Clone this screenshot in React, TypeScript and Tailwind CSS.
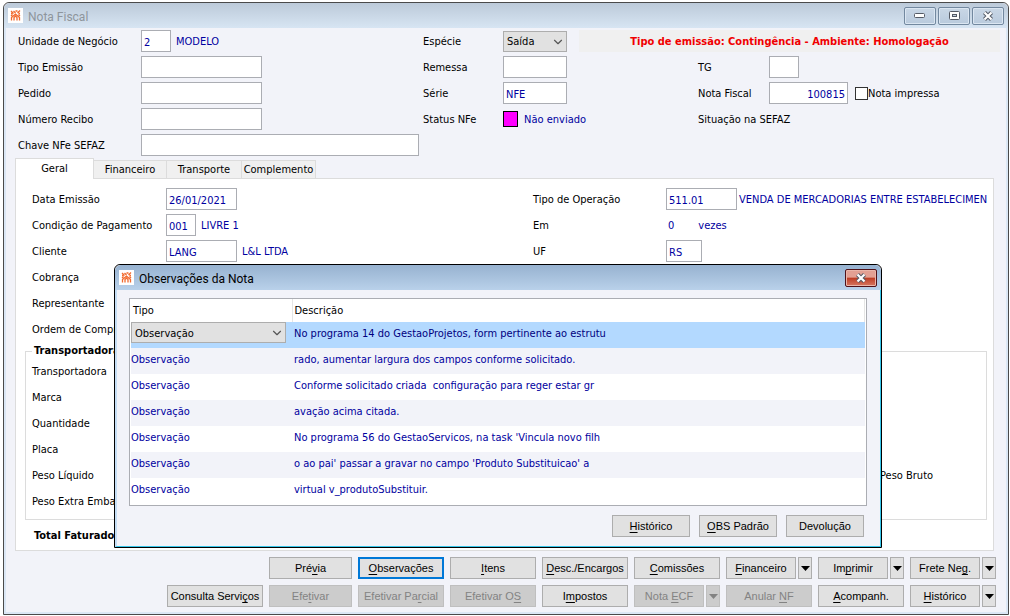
import type { ReactNode } from 'react';
import { ChevronDown } from 'lucide-react';

const tabs = [
  { name: 'Financeiro', width: 'w-[73px]' },
  { name: 'Transporte', width: 'w-[75px]' },
  { name: 'Complemento', width: 'w-[74px]' },
];

const notes = [
  'No programa 14 do GestaoProjetos, form pertinente ao estrutu',
  'rado, aumentar largura dos campos conforme solicitado.',
  'Conforme solicitado criada  configuração para reger estar gr',
  'avação acima citada.',
  "No programa 56 do GestaoServicos, na task 'Vincula novo filh",
  "o ao pai' passar a gravar no campo 'Produto Substituicao' a",
  'virtual v_produtoSubstituir.',
];

function AppIcon() {
  return (
    <svg width="15" height="15" viewBox="0 0 15 15" className="shrink-0 bg-white">
      <g fill="none" stroke="#f26a2e" strokeWidth="1.3">
        <path d="M3 3l2.5 2.5M5.5 3l2 2M9.5 5L12 2.5M7.5 3h2M3 5.5h1.5M10.5 5.5H12" />
        <path d="M3.5 12.5V9.5L7.5 6l4 3.5v3M6 12.5v-3L7.5 8 9 9.5v3M3 8l1.5-1.5M12 8l-1.5-1.5" />
      </g>
    </svg>
  );
}

function Field({ id, label, width = '', value = '', children, right = false }: {
  id: string;
  label: string;
  width?: string;
  value?: string;
  right?: boolean;
  children?: ReactNode;
}) {
  return (
    <>
      <label htmlFor={id} className="pt-0.5 whitespace-nowrap">{label}</label>
      <div className="flex min-w-0 items-center whitespace-nowrap text-[#0000a0]">
        <input
          id={id}
          defaultValue={value}
          className={`h-[22px] shrink-0 border border-[#abadb3] bg-white px-0.5 pt-0.5 outline-none ${width} ${right ? 'text-right' : ''}`}
        />
        {children}
      </div>
    </>
  );
}

function Select({ id, value, label, className }: { id: string; value: string; label: string; className: string }) {
  return (
    <div className={`relative shrink-0 ${className}`}>
      <select
        id={id}
        aria-label={label}
        defaultValue={value}
        className="h-[21px] w-full appearance-none border border-[#adadad] bg-[#e1e1e1] pt-0.5 pl-[3px] text-black outline-none"
      >
        <option>{value}</option>
      </select>
      <ChevronDown size={14} strokeWidth={2} className="pointer-events-none absolute top-1 right-0.5 text-[#555]" />
    </div>
  );
}

// "_" marks the letter used as keyboard shortcut
function Caption({ text }: { text: string }) {
  const [before, after] = text.split('_');
  if (after === undefined) return <>{text}</>;
  return (
    <>
      {before}
      <span className="underline underline-offset-2">{after[0]}</span>
      {after.slice(1)}
    </>
  );
}

function Button({ text, disabled = false, focused = false, menu = false }: {
  text: string;
  disabled?: boolean;
  focused?: boolean;
  menu?: boolean;
}) {
  const colors = disabled
    ? 'border-[#bfbfbf] bg-[#cccccc] text-[#838383]'
    : 'border-[#adadad] bg-[#e1e1e1] text-black';
  return (
    <div className="flex gap-0.5">
      <button
        disabled={disabled}
        className={`h-[22px] min-w-0 flex-1 whitespace-nowrap font-['Liberation_Sans',sans-serif] text-[11px] ${
          focused ? 'border-2 border-[#0078d7] bg-[#e1e1e1]' : `border ${colors}`
        }`}
      >
        <Caption text={text} />
      </button>
      {menu && (
        <button
          aria-label="Mais opções"
          disabled={disabled}
          className={`flex h-[22px] w-3.5 items-center justify-center border ${colors}`}
        >
          <svg width="9" height="5" viewBox="0 0 9 5" fill="currentColor" className="shrink-0">
            <path d="M0 0h9L4.5 5z" />
          </svg>
        </button>
      )}
    </div>
  );
}

function WindowButton({ label, children }: { label: string; children: ReactNode }) {
  return (
    <button
      aria-label={label}
      className="flex h-[18px] w-8 items-center justify-center rounded-xs border border-[#72889f] bg-linear-to-b from-[#c9d7e6] to-[#b9cadd] inset-ring inset-ring-[#dbe6f2]"
    >
      {children}
    </button>
  );
}

function CloseGlyph() {
  return (
    <svg width="12" height="10" viewBox="0 0 12 10">
      <path d="M2.5 1.5l7 7M9.5 1.5l-7 7" stroke="#555b66" strokeWidth="4.2" />
      <path d="M2.5 1.5l7 7M9.5 1.5l-7 7" stroke="#fff" strokeWidth="2.2" />
    </svg>
  );
}

function NotesDialog() {
  return (
    <div
      role="dialog"
      aria-label="Observações da Nota"
      className="absolute top-[261px] right-[126px] left-[110px] rounded-t-md border border-black bg-[#f2f3f9]"
    >
      <div className="flex h-[25px] items-center gap-[5px] rounded-t-md bg-linear-to-b from-[#97b2d0] to-[#b9d1ea] pr-1 pl-1 font-['Roboto',sans-serif] text-[12px]">
        <AppIcon />
        <h2 className="flex-1 pt-0.5">Observações da Nota</h2>
        <button
          aria-label="Fechar"
          className="flex h-[18px] w-8 items-center justify-center rounded-xs border border-[#4f1118] bg-linear-to-b from-[#e3a093] from-45% via-[#bd3b22] via-50% to-[#d67660] inset-ring inset-ring-[#eab5a9]"
        >
          <CloseGlyph />
        </button>
      </div>
      <div className="border-r border-b border-l-2 border-r-[#36c6ea] border-b-[#36c6ea] border-l-[#c5def5] pt-2 pr-[13px] pb-[9px] pl-3">
        <div className="border border-[#abadb3] bg-white px-px pb-px">
          <table className="w-full table-fixed">
            <thead>
              <tr className="h-[23px] text-left">
                <th className="w-[161px] border-r border-[#e5e5e5] pl-0.5 font-normal">Tipo</th>
                <th className="border-r border-[#e5e5e5] pl-0.5 font-normal">Descrição</th>
              </tr>
            </thead>
            <tbody className="text-[#0000a0]">
              {notes.map((note, i) => (
                <tr key={i} className={`h-[26px] ${i === 0 ? 'bg-[#b3d9ff] text-[#000080]' : i % 2 ? 'bg-[#f2f3f9]' : 'bg-white'}`}>
                  <td className={i === 0 ? 'pr-1.5 align-top' : 'pb-0.5'}>
                    {i === 0 ? <Select id="tipo-observacao" label="Tipo" value="Observação" className="w-full" /> : 'Observação'}
                  </td>
                  <td className="overflow-hidden pb-0.5 pl-0.5 whitespace-pre">{note}</td>
                </tr>
              ))}
            </tbody>
          </table>
        </div>
        <div className="mt-[9px] grid grid-cols-[78px_78px_78px] justify-end gap-[9px] pr-[3px]">
          <Button text="_Histórico" />
          <Button text="_OBS Padrão" />
          <Button text="Devolução" />
        </div>
      </div>
    </div>
  );
}

export default function App() {
  return (
    <div className="min-h-screen bg-white pt-0.5 pr-px pb-px pl-[3px] font-['DejaVu_Sans_Condensed','Noto_Sans',sans-serif] text-[11px] leading-[14px] text-black">
      <div className="relative rounded-t-md border border-[#4a4a4a] bg-[#f2f3f9]">
        <header className="flex h-[25px] items-center gap-[5px] rounded-t-md bg-linear-to-b from-[#bccad9] to-[#d7e5f3] pr-1 pl-1">
          <AppIcon />
          <h1 className="flex-1 pt-0.5 font-['Roboto',sans-serif] text-[12px] text-[#8e959c]">Nota Fiscal</h1>
          <div className="flex gap-0.5">
            <WindowButton label="Minimizar">
              <svg width="12" height="5" viewBox="0 0 12 5">
                <rect x="0.5" y="0.5" width="10" height="4" rx="1" fill="#fff" stroke="#555b66" />
              </svg>
            </WindowButton>
            <WindowButton label="Maximizar">
              <svg width="11" height="9" viewBox="0 0 11 9">
                <rect x="0.5" y="0.5" width="10" height="8" rx="1" fill="#fff" stroke="#555b66" />
                <rect x="3.5" y="3.5" width="4" height="2" fill="#c3d1e0" stroke="#555b66" />
              </svg>
            </WindowButton>
            <WindowButton label="Fechar">
              <CloseGlyph />
            </WindowButton>
          </div>
        </header>

        <main className="border-x-2 border-b-2 border-[#dbe7f5] pt-0.5 pr-2.5 pb-[5px] pl-[9px]">
          <div className="-mr-1 grid auto-rows-[22px] grid-cols-[123px_282fr_80px_195fr_71px_231fr] items-center gap-y-1 pl-[3px]">
            <Field id="unidade" label="Unidade de Negócio" width="w-[30px]" value="2">
              <span className="ml-[5px] pt-0.5">MODELO</span>
            </Field>
            <label htmlFor="especie" className="pt-0.5">Espécie</label>
            <div className="col-span-3 flex items-center gap-3">
              <Select id="especie" label="Espécie" value="Saída" className="w-16" />
              <p className="flex h-[22px] flex-1 items-center justify-center bg-[#f0f0f0] pt-0.5 font-bold whitespace-nowrap text-[#f00000]">
                Tipo de emissão: Contingência - Ambiente: Homologação
              </p>
            </div>

            <Field id="tipo-emissao" label="Tipo Emissão" width="w-[121px]" />
            <Field id="remessa" label="Remessa" width="w-16" />
            <Field id="tg" label="TG" width="w-[30px]" />

            <Field id="pedido" label="Pedido" width="w-[121px]" />
            <Field id="serie" label="Série" width="w-16" value="NFE" />
            <Field id="nota-fiscal" label="Nota Fiscal" width="w-[79px]" value="100815" right>
              <input id="impressa" type="checkbox" className="ml-[7px] size-[13px] appearance-none border border-[#333] bg-white" />
              <label htmlFor="impressa" className="pt-0.5 text-black">Nota impressa</label>
            </Field>

            <Field id="recibo" label="Número Recibo" width="w-[121px]" />
            <span className="pt-0.5">Status NFe</span>
            <div className="flex items-center gap-1.5 text-[#0000a0]">
              <span className="h-4 w-[15px] border border-black bg-[#ff00ff]" />
              <span className="pt-0.5">Não enviado</span>
            </div>
            <span className="pt-0.5 whitespace-nowrap">Situação na SEFAZ</span>
            <span />

            <Field id="chave" label="Chave NFe SEFAZ" width="w-[278px]" />
          </div>

          {/* Tabs */}
          <div role="tablist" className="mt-0.5 flex items-end">
            <button role="tab" aria-selected="true" className="relative -mb-px h-[21px] w-[79px] border border-b-0 border-[#dcdcdc] bg-white">
              Geral
            </button>
            {tabs.map((tab) => (
              <button
                key={tab.name}
                role="tab"
                aria-selected="false"
                className={`h-[18px] border-t border-r border-[#dcdcdc] bg-[#f0f0f0] pt-px ${tab.width}`}
              >
                {tab.name}
              </button>
            ))}
          </div>

          <section className="mr-0.5 border border-[#dcdcdc] bg-white pt-[9px] pr-1.5 pb-1 pl-[9px]">
            <div className="grid auto-rows-[22px] grid-cols-[134px_367fr_133px_321fr] items-center gap-y-1 pl-[7px]">
              <Field id="data-emissao" label="Data Emissão" width="w-[71px]" value="26/01/2021" />
              <Field id="operacao" label="Tipo de Operação" width="w-[71px]" value="511.01">
                <span className="ml-0.5 pt-0.5">VENDA DE MERCADORIAS ENTRE ESTABELECIMEN</span>
              </Field>
              <Field id="pagamento" label="Condição de Pagamento" width="w-[30px]" value="001">
                <span className="ml-[5px] pt-0.5">LIVRE 1</span>
              </Field>
              <span className="pt-0.5">Em</span>
              <div className="flex gap-6 pt-0.5 pl-0.5 text-[#0000a0]">
                <span>0</span>
                <span>vezes</span>
              </div>
              <Field id="cliente" label="Cliente" width="w-[71px]" value="LANG">
                <span className="ml-[5px] pt-0.5">L&amp;L LTDA</span>
              </Field>
              <Field id="uf" label="UF" width="w-9" value="RS" />
              <span className="col-span-4 pt-0.5">Cobrança</span>
              <span className="col-span-4 pt-0.5">Representante</span>
              <span className="col-span-4 pt-0.5">Ordem de Compra</span>
            </div>

            <fieldset className="mt-1 border border-[#dcdcdc] pb-1.5 pl-1.5">
              <legend className="px-0.5 font-bold">Transportadora</legend>
              <div className="grid auto-rows-[22px] grid-cols-[1fr_106px] items-center gap-y-1 pt-[3px]">
                <span className="col-span-2">Transportadora</span>
                <span className="col-span-2">Marca</span>
                <span className="col-span-2">Quantidade</span>
                <span className="col-span-2">Placa</span>
                <span>Peso Líquido</span>
                <span>Peso Bruto</span>
                <span className="col-span-2">Peso Extra Embalagem</span>
              </div>
            </fieldset>
            <p className="mt-[9px] mb-[3px] pl-[9px] font-bold">Total Faturado</p>
          </section>

          {/* Actions */}
          <div className="mt-1.5 grid grid-cols-[96px_83px_repeat(7,86px)] justify-end gap-1.5">
            <span />
            <Button text="Pré_via" />
            <Button text="_Observações" focused />
            <Button text="_Itens" />
            <Button text="_Desc./Encargos" />
            <Button text="_Comissões" />
            <Button text="_Financeiro" menu />
            <Button text="Im_primir" menu />
            <Button text="Frete Ne_g." menu />
            <Button text="Consulta Servi_ços" />
            <Button text="Efe_tivar" disabled />
            <Button text="Efetivar Pa_rcial" disabled />
            <Button text="Efetivar O_S" disabled />
            <Button text="I_mpostos" />
            <Button text="Nota _ECF" disabled menu />
            <Button text="Anular _NF" disabled />
            <Button text="_Acompanh." />
            <Button text="_Histórico" menu />
          </div>
        </main>

        <NotesDialog />
      </div>
    </div>
  );
}
